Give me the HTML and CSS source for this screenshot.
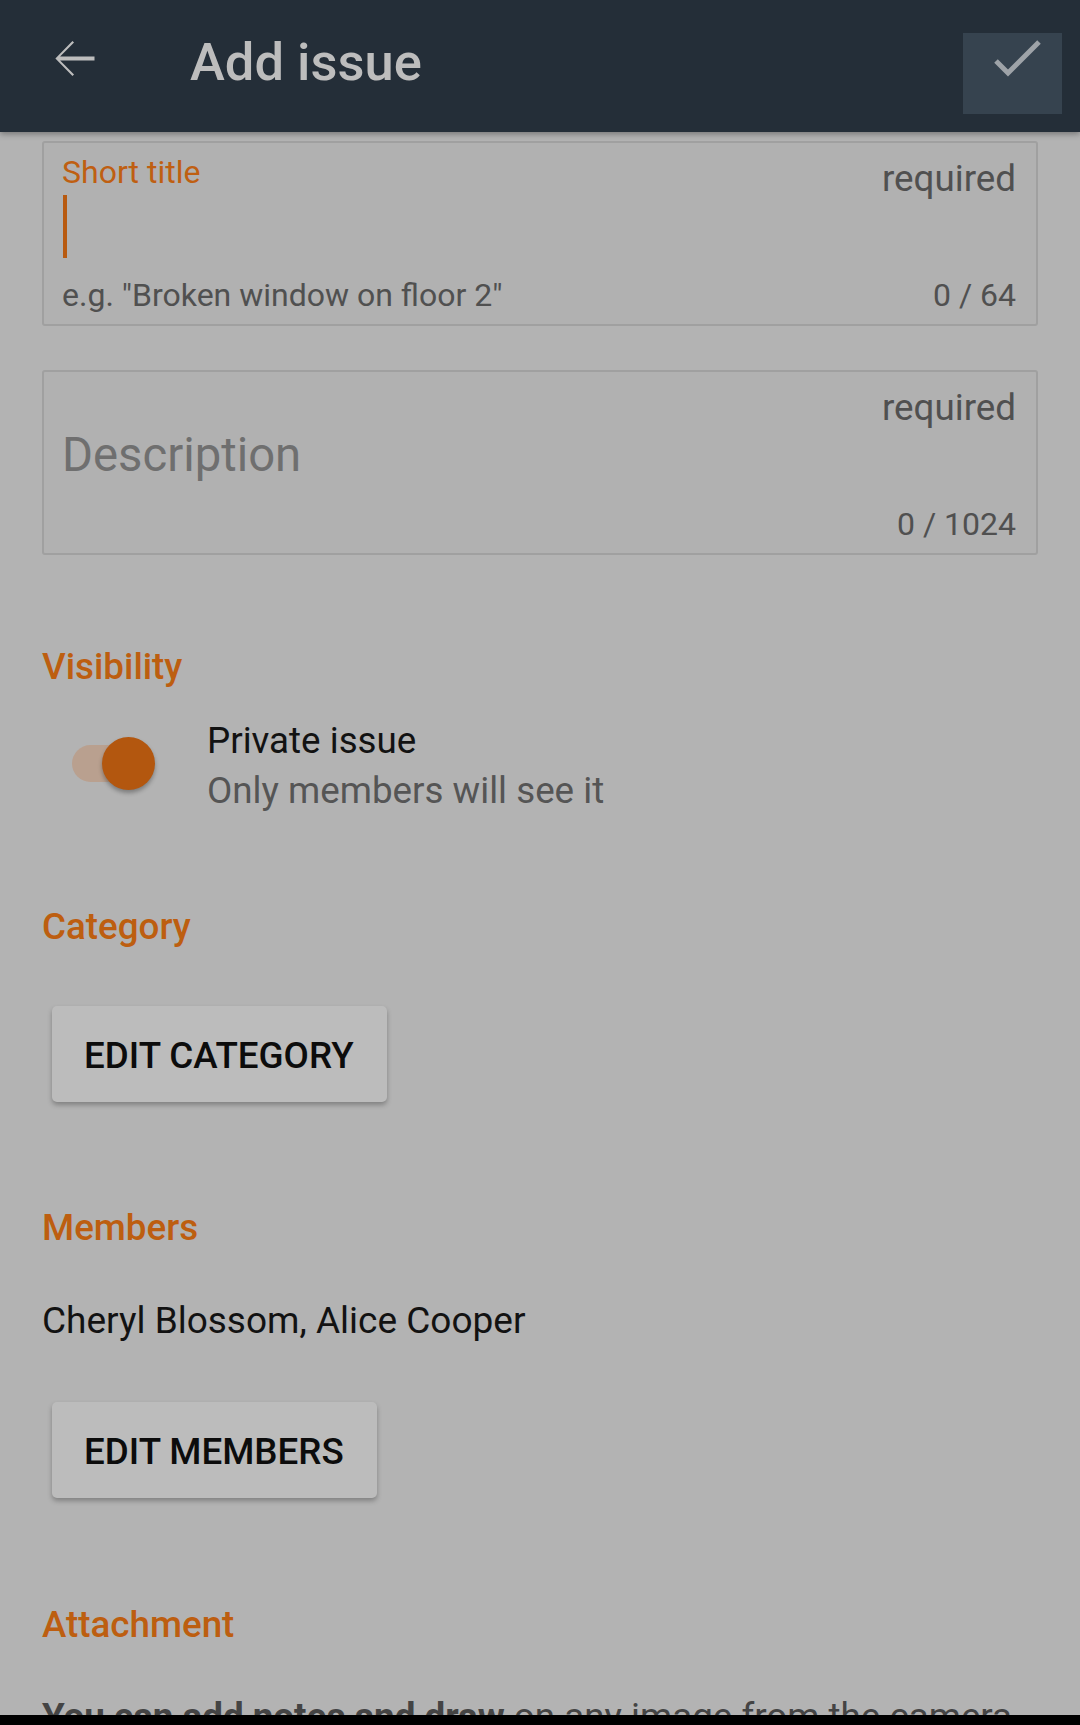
FILE: index.html
```html
<!DOCTYPE html>
<html lang="en">
<head>
<meta charset="utf-8">
<title>Add issue</title>
<link rel="stylesheet" href="styles.css">
</head>
<body>
<div class="screen">
  <header class="appbar">
    <svg class="back" viewBox="0 0 24 24" width="63" height="63" aria-hidden="true">
      <path d="M20 11.25H6.9l5.3-5.3L11.6 5.3 5.1 12l6.5 6.7.6-.65-5.3-5.3H20z" fill="#bdbdbd"/>
    </svg>
    <h1 class="title">Add issue</h1>
    <button class="done" aria-label="Save">
      <svg viewBox="0 0 99 81" width="99" height="81" aria-hidden="true">
        <polyline points="33,28 45,40 76,9" fill="none" stroke="#9ea3a8" stroke-width="5" stroke-linecap="butt"/>
      </svg>
    </button>
  </header>

  <main class="content">
    <div class="field">
      <div class="field-top">
        <span class="field-label">Short title</span>
        <span class="field-req">required</span>
      </div>
      <div class="cursor"></div>
      <div class="field-bottom">
        <span class="hint">e.g. "Broken window on floor 2"</span>
        <span class="counter">0 / 64</span>
      </div>
    </div>

    <div class="field field-desc">
      <div class="field-top">
        <span></span>
        <span class="field-req">required</span>
      </div>
      <div class="desc-placeholder">Description</div>
      <div class="field-bottom desc-bottom">
        <span></span>
        <span class="counter">0 / 1024</span>
      </div>
    </div>

    <h2 class="section-title visibility">Visibility</h2>
    <div class="switch-row">
      <div class="switch">
        <div class="track"></div>
        <div class="thumb"></div>
      </div>
      <div class="switch-text">
        <div class="switch-main">Private issue</div>
        <div class="switch-sub">Only members will see it</div>
      </div>
    </div>

    <h2 class="section-title category">Category</h2>
    <button class="btn btn-category">EDIT CATEGORY</button>

    <h2 class="section-title members">Members</h2>
    <p class="names">Cheryl Blossom, Alice Cooper</p>
    <button class="btn btn-members">EDIT MEMBERS</button>

    <h2 class="section-title attachment">Attachment</h2>
    <p class="note"><strong>You can add notes and draw</strong> on any image from the camera or gallery.</p>
  </main>

  <div class="navbar"></div>
</div>
</body>
</html>
```

FILE: styles.css
```css
* {
  box-sizing: border-box;
}

html, body {
  margin: 0;
  padding: 0;
  background: #b3b3b3;
}

body {
  font-family: Roboto, "Noto Sans", "Liberation Sans", sans-serif;
}

.screen {
  width: 1080px;
  height: 1725px;
  display: flex;
  flex-direction: column;
  overflow: hidden;
  background: #b3b3b3;
}

/* App bar */
.appbar {
  flex: none;
  height: 132px;
  background: #242e38;
  display: flex;
  align-items: flex-start;
  padding-left: 42px;
  box-shadow: 0 2px 6px rgba(0, 0, 0, 0.35);
  position: relative;
  z-index: 1;
}

.back {
  flex: none;
  margin-top: 27px;
}

.title {
  margin: 32px 0 0 85px;
  font-size: 52.5px;
  line-height: 60px;
  font-weight: 500;
  color: #bdbdbd;
}

.done {
  margin: 33px 18px 0 auto;
  width: 99px;
  height: 81px;
  padding: 0;
  border: none;
  background: #36434f;
  display: block;
}

.done svg {
  display: block;
}

/* Content */
.content {
  flex: 1;
  overflow: hidden;
  padding: 9px 42px 0;
}

.field {
  height: 185px;
  border: 2px solid #a0a0a0;
  border-radius: 3px;
  padding: 9px 20px 0 18px;
  display: flex;
  flex-direction: column;
  background: #b1b1b1;
}

.field-desc {
  margin-top: 44px;
}

.field-top {
  display: flex;
  justify-content: space-between;
  align-items: flex-start;
  height: 40px;
}

.field-label {
  font-size: 32px;
  line-height: 40px;
  color: #bf5f12;
}

.field-req {
  font-size: 36.75px;
  line-height: 22px;
  margin-top: 16px;
  color: #505050;
}

.cursor {
  width: 4px;
  height: 63px;
  margin: 3px 0 0 1px;
  background: #b85a10;
}

.field-bottom {
  display: flex;
  justify-content: space-between;
  margin-top: 17px;
  font-size: 32px;
  line-height: 40px;
  color: #505050;
}

.desc-bottom {
  margin-top: 21px;
}

.desc-placeholder {
  margin-top: 6px;
  font-size: 47.25px;
  line-height: 56px;
  color: #6f6f6f;
}

/* Sections */
.section-title {
  margin: 0;
  font-size: 36.75px;
  line-height: 44px;
  font-weight: 500;
  color: #bd5e10;
}

.visibility {
  margin-top: 90px;
}

.category {
  margin-top: 90px;
}

.members {
  margin-top: 104px;
}

.attachment {
  margin-top: 105px;
}

.switch-row {
  margin-top: 27px;
  padding-left: 30px;
  display: flex;
  align-items: flex-start;
}

.switch {
  flex: none;
  position: relative;
  width: 84px;
  height: 53px;
  margin-top: 21px;
}

.track {
  width: 78px;
  height: 37px;
  margin-top: 8px;
  border-radius: 18.5px;
  background: #b9a08f;
}

.thumb {
  position: absolute;
  left: 30px;
  top: 0;
  width: 53px;
  height: 53px;
  border-radius: 50%;
  background: #b3570f;
  box-shadow: 0 3px 4px rgba(0, 0, 0, 0.3);
}

.switch-text {
  margin-left: 51px;
  font-size: 36.75px;
  line-height: 49px;
}

.switch-main {
  color: #121212;
}

.switch-sub {
  margin-top: 1px;
  color: #555555;
}

.btn {
  display: block;
  width: fit-content;
  height: 96px;
  margin: 0 0 0 10px;
  padding: 0 33px 0 32px;
  border: none;
  border-radius: 5px;
  background: #bcbcbc;
  box-shadow: 0 3px 5px rgba(0, 0, 0, 0.28);
  font-family: Roboto, "Noto Sans", "Liberation Sans", sans-serif;
  font-size: 36.75px;
  line-height: 100px;
  font-weight: 500;
  color: #0c0c0c;
}

.btn-category {
  margin-top: 57px;
}

.btn-members {
  margin-top: 59px;
}

.names {
  margin: 49px 0 0;
  font-size: 37px;
  line-height: 44px;
  color: #121212;
}

.note {
  margin: 48px 0 0;
  font-size: 36.75px;
  line-height: 44px;
  color: #444444;
}

.note strong {
  font-weight: 700;
}

.navbar {
  flex: none;
  height: 10px;
  background: #000000;
}
```
